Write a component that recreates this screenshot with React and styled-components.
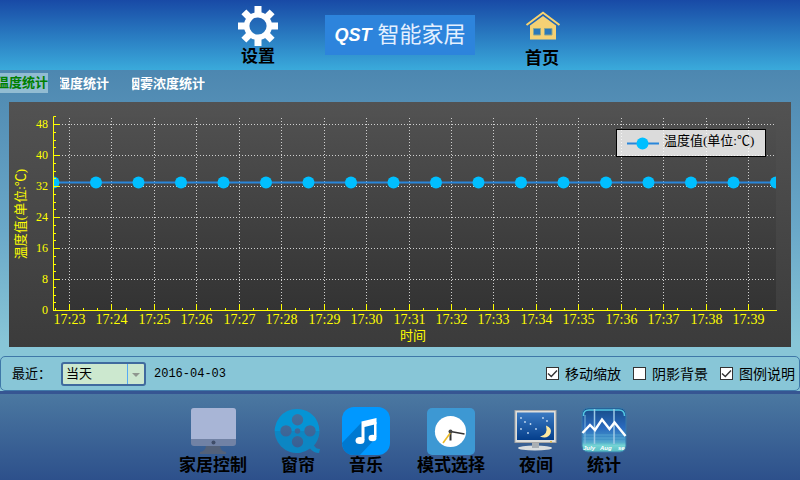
import React, { useState } from 'react';
import styled, { createGlobalStyle } from 'styled-components';

const GlobalStyle = createGlobalStyle`
  * { box-sizing: border-box; }
  body {
    margin: 0;
    font-family: "Liberation Sans", "Noto Sans CJK SC", sans-serif;
    color: #000;
  }
  button, select, input { font: inherit; color: inherit; margin: 0; }
`;

const Page = styled.div`
  min-height: 100vh;
  display: flex;
  flex-direction: column;
`;

const Header = styled.header`
  display: flex;
  justify-content: center;
  gap: 39px;
  height: 70px;
  background: linear-gradient(#184aa6, #3aaadb);
`;

const HeaderButton = styled.button`
  display: flex;
  flex-direction: column;
  align-items: center;
  width: 56px;
  padding: ${(p) => p.$top}px 0 0;
  border: 0;
  background: none;
  font-size: 17px;
  font-weight: 700;
  line-height: 22px;
  white-space: nowrap;
`;

const Brand = styled.h1`
  display: flex;
  align-items: center;
  justify-content: center;
  gap: 6px;
  width: 150px;
  height: 40px;
  margin: 15px 0 0;
  background: #2d84dc;
  color: #e4f0ff;
  font-size: 22px;
  font-weight: 400;
  line-height: 40px;
  white-space: nowrap;
`;

const BrandMark = styled.span`
  font-size: 18px;
  font-style: italic;
  font-weight: 700;
  color: #fff;
`;

const Main = styled.main`
  flex: 1;
  display: flex;
  flex-direction: column;
  background: linear-gradient(#4d87b0, #6aa8c8 50%, #88c6d7 85%);
`;

const TabBar = styled.nav`
  display: flex;
  align-items: flex-start;
  height: 32px;
  padding-top: 3px;
`;

const Tab = styled.button`
  display: flex;
  justify-content: flex-end;
  width: ${(p) => p.$width}px;
  height: 20px;
  margin-right: ${(p) => p.$gap}px;
  padding: 0;
  border: 0;
  overflow: hidden;
  background: ${(p) => (p.$active ? '#92bcd2' : 'transparent')};
  color: ${(p) => (p.$active ? '#008000' : '#fff')};
  font-size: 13px;
  font-weight: 700;
  line-height: ${(p) => (p.$active ? 20 : 22)}px;
  white-space: nowrap;
`;

const ChartPanel = styled.section`
  margin: 0 9px 9px;
`;

const ChartSvg = styled.svg`
  display: block;
  width: 100%;
  height: auto;
  font-family: "Liberation Serif", "Noto Sans CJK SC", serif;
`;

const OptionsBar = styled.form`
  display: flex;
  align-items: center;
  height: 35px;
  padding: 0 4px 0 11px;
  border: 1px solid #3f78a8;
  border-radius: 5px;
  font-size: 14px;
  line-height: 18px;
`;

const RangeLabel = styled.label`
  width: 49px;
  font-size: 13px;
  white-space: nowrap;
`;

const SelectBox = styled.span`
  position: relative;
  display: flex;
`;

const RangeSelect = styled.select`
  appearance: none;
  width: 85px;
  height: 24px;
  padding: 0 20px 0 3px;
  border: 2px solid #406a9e;
  border-radius: 3px;
  background: #cce8cf;
  font-size: 13px;
`;

const SelectArrow = styled.svg`
  position: absolute;
  top: 2px;
  right: 2px;
  width: 17px;
  height: 20px;
  border-left: 1px solid #55aaf4;
  pointer-events: none;
`;

const DateText = styled.time`
  margin-left: 8px;
  font-family: "Liberation Mono", monospace;
  font-size: 12px;
`;

const CheckGroup = styled.div`
  display: flex;
  gap: 12px;
  margin-left: auto;
`;

const CheckLabel = styled.label`
  display: flex;
  align-items: center;
  gap: 6px;
  white-space: nowrap;
`;

const CheckInput = styled.input`
  appearance: none;
  width: 13px;
  height: 13px;
  border: 1px solid #333;
  background: #fff;
  &:checked {
    background: #fff url("data:image/svg+xml,%3Csvg xmlns='http://www.w3.org/2000/svg' viewBox='0 0 11 11'%3E%3Cpath d='M1 5.500L4.300 8.500L10 2.500' fill='none' stroke='%23333' stroke-width='1.400'/%3E%3C/svg%3E") center / 11px no-repeat;
  }
`;

const Footer = styled.footer`
  display: flex;
  justify-content: center;
  height: 89px;
  padding-top: 13px;
  border-top: 3px solid #365592;
  background: linear-gradient(#4b78a1, #2d508b);
`;

const FooterButton = styled.button`
  display: flex;
  flex-direction: column;
  align-items: center;
  width: ${(p) => (p.$wide ? 102 : 68)}px;
  height: 70px;
  padding: 0;
  border: 0;
  background: none;
  font-size: 17px;
  font-weight: 700;
  line-height: 22px;
  white-space: nowrap;
`;

const Icon = styled.svg`
  display: block;
  flex: none;
  width: ${(p) => p.$size}px;
  height: ${(p) => p.$size}px;
`;

function GearIcon() {
  return (
    <Icon $size={40} viewBox="0 0 40 40" aria-hidden="true">
      <g stroke="#fff" strokeWidth="7">
        {[0, 45, 90, 135].map((a) => (
          <g key={a} transform={`rotate(${a} 20 20)`}>
            <path d="M20 0V9M20 31V40" />
          </g>
        ))}
      </g>
      <circle cx="20" cy="20" r="11.3" fill="none" stroke="#fff" strokeWidth="5.4" />
    </Icon>
  );
}

function HomeIcon() {
  return (
    <Icon $size={40} viewBox="0 0 40 40" aria-hidden="true">
      <path d="M4.500 17L21 4.800L37.500 17" fill="none" stroke="#f8d36f" strokeWidth="2" />
      <path d="M21 8L34 17.500V31.500H8V17.500Z" fill="#f5d174" />
      <path d="M11.500 20.500h7v6.500h-7zM22.500 20.500h7.500v6.500h-7.500z" fill="#2a78ba" stroke="#8ba58f" />
    </Icon>
  );
}

function MonitorIcon() {
  return (
    <Icon $size={48} viewBox="0 0 48 48" aria-hidden="true">
      <path d="M17 38H31Q31 44 37 45V47H11V45Q17 44 17 38Z" fill="#536179" />
      <rect x="2" y="1" width="45" height="38" rx="3" fill="#7182a5" />
      <path d="M5 1H44Q47 1 47 4V32H2V4Q2 1 5 1Z" fill="#a8b5d6" />
      <circle cx="24.500" cy="35.500" r="2" fill="#3f4d68" />
    </Icon>
  );
}

function FilmIcon() {
  return (
    <Icon $size={48} viewBox="0 0 48 48" aria-hidden="true">
      <defs>
        <linearGradient id="reel" x1="0" y1="0" x2="0" y2="1">
          <stop offset="0.500" stopColor="#0594d4" />
          <stop offset="0.500" stopColor="#0c86c3" />
        </linearGradient>
      </defs>
      <path
        fillRule="evenodd"
        fill="url(#reel)"
        d="M23.500 2A22 22 0 1 0 36 41.500Q40 46 45 46L46 42Q42 42 40 38.500A22 22 0 0 0 23.500 2Z
        M23.500 7a5.700 5.700 0 1 1 0 11.400a5.700 5.700 0 1 1 0-11.400Z
        M23.500 29a5.700 5.700 0 1 1 0 11.400a5.700 5.700 0 1 1 0-11.400Z
        M12 18.200a5.700 5.700 0 1 1 0 11.400a5.700 5.700 0 1 1 0-11.400Z
        M36 18.200a5.700 5.700 0 1 1 0 11.400a5.700 5.700 0 1 1 0-11.400Z
        M23.500 21.200a2.800 2.800 0 1 1 0 5.600a2.800 2.800 0 1 1 0-5.600Z"
      />
    </Icon>
  );
}

function MusicIcon() {
  return (
    <Icon $size={48} viewBox="0 0 48 48" aria-hidden="true">
      <rect width="48" height="48" rx="12" fill="#0098ff" />
      <path d="M0 36L20 15L34 12L33 32L18 48H12Q1 48 0 36Z" fill="#0079d1" />
      <path d="M19.500 14.500L34.500 11V17L22.500 20V33H19.500Z" fill="#fff" />
      <path d="M32 15H34.500V30H32Z" fill="#fff" />
      <ellipse cx="18" cy="33.500" rx="4.500" ry="3.500" fill="#fff" />
      <ellipse cx="30.500" cy="31" rx="4" ry="3.300" fill="#fff" />
    </Icon>
  );
}

function ClockIcon() {
  return (
    <Icon $size={48} viewBox="0 0 48 48" aria-hidden="true">
      <rect x="0" y="1" width="48" height="47" rx="5" fill="#3d98d3" />
      <circle cx="23.500" cy="24.500" r="15.600" fill="#fff" />
      <path d="M23.500 24V33.500" stroke="#333" strokeWidth="2" />
      <path d="M23.500 24.500L37.500 27" stroke="#333" strokeWidth="1.600" />
      <path d="M24 25L16 36" stroke="#ecbb27" strokeWidth="1.600" />
      <circle cx="23.500" cy="24.500" r="2" fill="#444" />
    </Icon>
  );
}

function NightIcon() {
  const stars = [[9, 11], [13, 15], [18.500, 17], [9, 22], [24, 22], [31, 11], [35, 14], [16, 26]];
  return (
    <Icon $size={48} viewBox="0 0 48 48" aria-hidden="true">
      <defs>
        <linearGradient id="night-sky" x1="0" y1="0" x2="0" y2="1">
          <stop offset="0" stopColor="#3b7ac2" />
          <stop offset="1" stopColor="#043e8b" />
        </linearGradient>
      </defs>
      <ellipse cx="23" cy="41" rx="17" ry="2.500" fill="#d9dddf" />
      <path d="M20 36H27V41H20Z" fill="#a9afb4" />
      <rect x="3" y="3.500" width="41" height="32" fill="#dfdfdc" stroke="#aaa9a8" />
      <rect x="5" y="5.500" width="37" height="27.500" fill="url(#night-sky)" />
      {stars.map(([x, y]) => (
        <circle key={`${x}-${y}`} cx={x} cy={y} r="0.900" fill="#c8ddf2" />
      ))}
      <path d="M34 18.500Q40.500 21 38.500 26.500Q35.500 32.500 28 29.500Q36.500 28 34 18.500Z" fill="#ffeaa0" />
      <path d="M38 34h2v1.500h-2z" fill="#e3bb45" />
    </Icon>
  );
}

function StatsIcon() {
  return (
    <Icon $size={48} viewBox="0 0 48 48" aria-hidden="true">
      <defs>
        <linearGradient id="stats-fill" x1="0" y1="0" x2="0" y2="1">
          <stop offset="0" stopColor="#174c87" />
          <stop offset="0.450" stopColor="#2a6abf" />
          <stop offset="0.750" stopColor="#459bc8" />
          <stop offset="0.850" stopColor="#74d4d4" />
          <stop offset="1" stopColor="#58bdc3" />
        </linearGradient>
      </defs>
      <rect x="2" y="1" width="44" height="44" rx="6" fill="url(#stats-fill)" stroke="#397aaa" />
      <path d="M3.500 9Q3 3 9 3H39Q44.500 3 44.500 9" fill="none" stroke="#53c7e3" strokeWidth="1.500" />
      <path d="M3 28H45M3 31H45M3 34H45" stroke="#67b7da" strokeWidth="0.600" />
      <path d="M14.500 2V37M34 2V37" stroke="#9dc9e5" strokeWidth="1.500" />
      <path d="M5 8V37" stroke="#7eb8dc" />
      <path d="M2.500 26L10 18L15 23L22 12.500L29.500 22L34.500 15.500L45.500 29" fill="none" stroke="#fff" strokeWidth="2.400" />
      <g fill="#fff" fontSize="6" fontWeight="700" fontStyle="italic">
        <text x="3" y="43">July</text>
        <text x="20" y="43">Aug</text>
        <text x="38" y="43">se</text>
      </g>
    </Icon>
  );
}

const TEMPERATURE = Array.from({ length: 18 }, () => 33);
const Y_VALUES = [48, 40, 32, 24, 16, 8, 0];
const MINUTES = Array.from({ length: 17 }, (_, i) => 23 + i);

const PLOT = { left: 44, right: 767, top: 15, bottom: 208 };
const yOf = (v) => Math.round(PLOT.bottom - (v * 31) / 8) + 0.5;
const xOf = (i) => Math.round(60 + i * 42.44) + 0.5;

function Chart({ showLegend, shaded }) {
  const yMinor = Array.from({ length: 25 }, (_, i) => i * 2).filter((v) => v % 8);
  const xMinor = Array.from({ length: 51 }, (_, i) => i - 1).filter((i) => i % 3);
  const points = TEMPERATURE.map((v, i) => [PLOT.left + 0.5 + i * 42.5, yOf(v)]);
  return (
    <ChartSvg viewBox="0 0 782 245" role="img" aria-label="温度统计">
      <defs>
        <linearGradient id="panel" x1="0" y1="0" x2="0" y2="1">
          <stop offset="0" stopColor="#525252" />
          <stop offset="1" stopColor="#3b3b3b" />
        </linearGradient>
        <linearGradient id="plot" x1="0" y1="0" x2="0" y2="1">
          <stop offset="0" stopColor="#505050" />
          <stop offset="1" stopColor="#333" />
        </linearGradient>
        <clipPath id="plot-clip">
          <rect x={PLOT.left} y={PLOT.top} width={PLOT.right - PLOT.left} height={PLOT.bottom - PLOT.top} />
        </clipPath>
      </defs>
      <rect width="782" height="245" fill="url(#panel)" />
      <rect x={PLOT.left} y={PLOT.top} width={PLOT.right - PLOT.left} height={PLOT.bottom - PLOT.top} fill="url(#plot)" />

      <g stroke="#d0d0d0" strokeDasharray="1 2">
        {Y_VALUES.slice(0, -1).map((v) => (
          <path key={v} d={`M${PLOT.left} ${yOf(v)}H${PLOT.right}`} />
        ))}
        {MINUTES.map((m, i) => (
          <path key={m} d={`M${xOf(i)} ${PLOT.top + 1}V${PLOT.bottom}`} />
        ))}
      </g>

      <g clipPath="url(#plot-clip)">
        {shaded && <path d={`M44 ${yOf(33)}H767V208H44Z`} fill="#00bfff" opacity="0.300" />}
        <path d={`M${points.map((p) => p.join(' ')).join('L')}`} fill="none" stroke="#2986da" strokeWidth="2" />
        {points.map(([x, y]) => (
          <circle key={x} cx={x} cy={y} r="6" fill="#00bfff" />
        ))}
      </g>

      <g stroke="#ff0" fill="none">
        <path d="M47 14.500H44.500V208.500H768" />
        {Y_VALUES.map((v) => <path key={v} d={`M44 ${yOf(v)}h7`} />)}
        {yMinor.map((v) => <path key={v} d={`M44 ${yOf(v)}h3`} />)}
        {MINUTES.map((m, i) => <path key={m} d={`M${xOf(i)} 208v-6`} />)}
        {xMinor.map((i) => <path key={i} d={`M${xOf(i / 3)} 208v-2`} />)}
      </g>

      <g fill="#ff0">
        <g fontSize="12" textAnchor="end">
          {Y_VALUES.map((v) => <text key={v} x="39" y={Math.round(yOf(v)) + 3}>{v}</text>)}
        </g>
        <g fontSize="14" textAnchor="middle">
          {MINUTES.map((m, i) => <text key={m} x={xOf(i)} y="222">{`17:${m}`}</text>)}
        </g>
        <g fontSize="13" textAnchor="middle">
          <text x="404" y="238">时间</text>
          <text transform="translate(16 112) rotate(-90)">温度值(单位:℃)</text>
        </g>
      </g>

      {showLegend && (
        <g>
          <rect x="607.500" y="27.500" width="149" height="27" fill="#fff" fillOpacity="0.800" stroke="#000" />
          <path d="M618 41.500H650" stroke="#2986da" strokeWidth="2" />
          <circle cx="633.500" cy="41.500" r="6" fill="#00bfff" />
          <text x="655" y="43" fontSize="13">温度值(单位:℃)</text>
        </g>
      )}
    </ChartSvg>
  );
}

const TABS = [
  { label: '温度统计', width: 48, gap: 12 },
  { label: '湿度统计', width: 49, gap: 23 },
  { label: '烟雾浓度统计', width: 73, gap: 0 },
];

const ACTIONS = [
  { label: '家居控制', icon: MonitorIcon, wide: true },
  { label: '窗帘', icon: FilmIcon },
  { label: '音乐', icon: MusicIcon },
  { label: '模式选择', icon: ClockIcon, wide: true },
  { label: '夜间', icon: NightIcon },
  { label: '统计', icon: StatsIcon },
];

export default function App() {
  const [tab, setTab] = useState(0);
  const [zoom, setZoom] = useState(true);
  const [shaded, setShaded] = useState(false);
  const [legend, setLegend] = useState(true);

  const options = [
    { label: '移动缩放', value: zoom, set: setZoom },
    { label: '阴影背景', value: shaded, set: setShaded },
    { label: '图例说明', value: legend, set: setLegend },
  ];

  return (
    <Page lang="zh-CN">
      <GlobalStyle />
      <Header>
        <HeaderButton type="button" $top={6}><GearIcon />设置</HeaderButton>
        <Brand><BrandMark>QST</BrandMark>智能家居</Brand>
        <HeaderButton type="button" $top={8}><HomeIcon />首页</HeaderButton>
      </Header>
      <Main>
        <TabBar>
          {TABS.map((t, i) => (
            <Tab key={t.label} type="button" $width={t.width} $gap={t.gap} $active={tab === i} onClick={() => setTab(i)}>
              {t.label}
            </Tab>
          ))}
        </TabBar>
        <ChartPanel>
          <Chart showLegend={legend} shaded={shaded} />
        </ChartPanel>
        <OptionsBar>
          <RangeLabel htmlFor="range">最近：</RangeLabel>
          <SelectBox>
            <RangeSelect id="range" defaultValue="当天">
              <option>当天</option>
            </RangeSelect>
            <SelectArrow viewBox="0 0 16 20" aria-hidden="true">
              <path d="M4 9H12L8 13Z" fill="#8f978f" />
            </SelectArrow>
          </SelectBox>
          <DateText dateTime="2016-04-03">2016-04-03</DateText>
          <CheckGroup>
            {options.map((o) => (
              <CheckLabel key={o.label}>
                <CheckInput type="checkbox" checked={o.value} onChange={(e) => o.set(e.target.checked)} />
                {o.label}
              </CheckLabel>
            ))}
          </CheckGroup>
        </OptionsBar>
      </Main>
      <Footer>
        {ACTIONS.map(({ label, icon: ActionIcon, wide }) => (
          <FooterButton key={label} type="button" $wide={wide}>
            <ActionIcon />
            {label}
          </FooterButton>
        ))}
      </Footer>
    </Page>
  );
}
